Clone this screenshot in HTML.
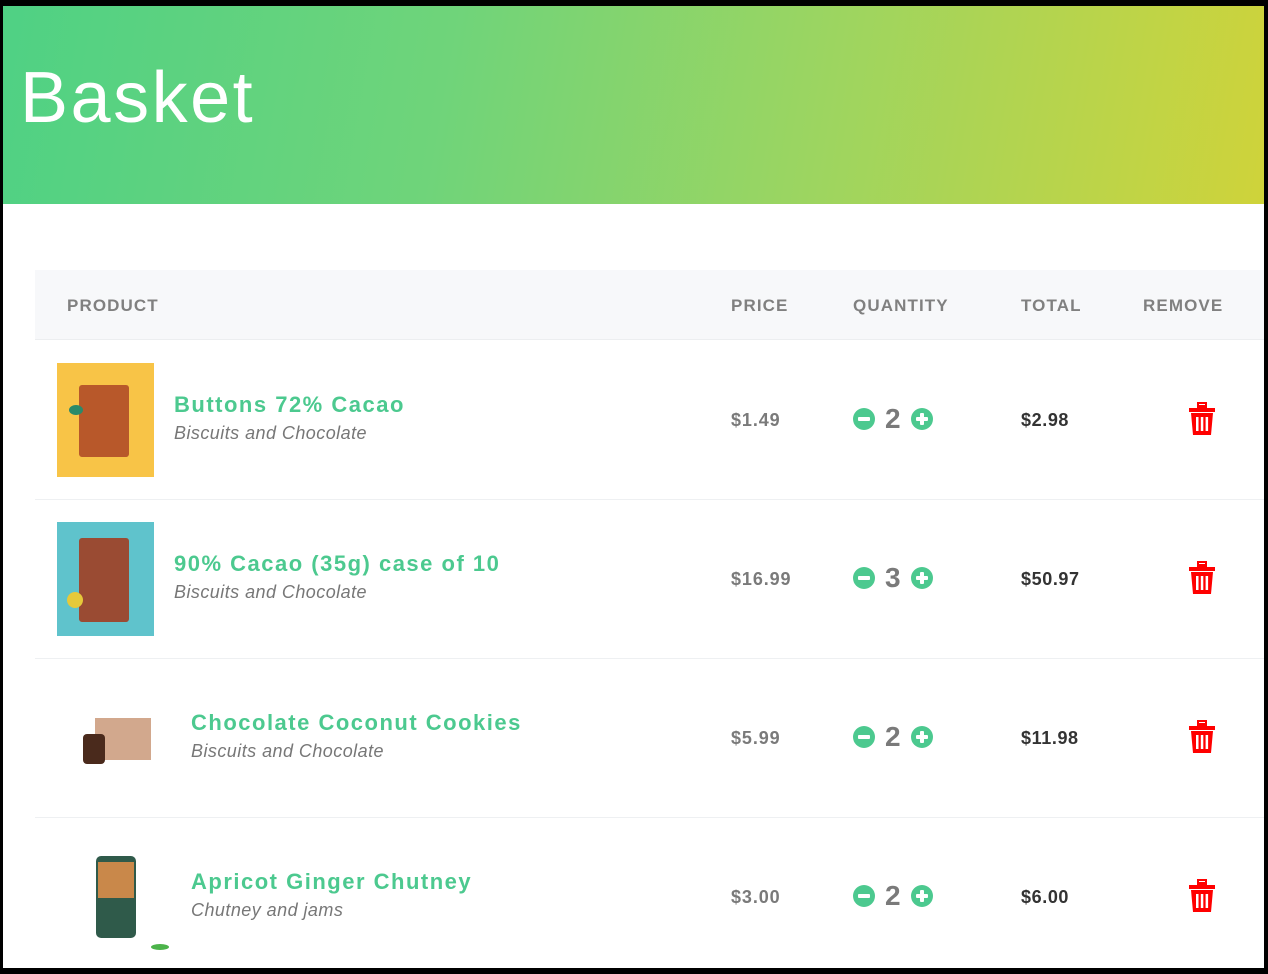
<!DOCTYPE html>
<html><head><meta charset="utf-8"><style>
*{margin:0;padding:0;box-sizing:border-box}
body{width:1268px;height:974px;background:#000;overflow:hidden;font-family:"Liberation Sans",sans-serif;position:relative}
.page{position:absolute;left:3px;top:6px;width:1261px;height:962px;background:#fff;overflow:hidden}
.hdr{position:absolute;left:0;top:0;width:1261px;height:198px;background:linear-gradient(100deg,#4fd184 0%,#6fd47a 35%,#9dd560 65%,#cfd33a 100%)}
.hdr h1{position:absolute;left:17px;top:51px;color:#fff;font-size:72px;font-weight:normal;letter-spacing:2.5px}
.th{position:absolute;left:32px;top:264px;width:1229px;height:70px;background:#f7f8fa;border-bottom:1px solid #eceef0}
.th span{position:absolute;top:26px;font-size:17px;font-weight:bold;color:#808080;letter-spacing:1.1px}
.row{position:absolute;left:32px;width:1229px;height:159px;border-bottom:1px solid #eef0f2}
.name{position:absolute;font-size:22px;font-weight:bold;color:#4cc98f;letter-spacing:1.5px}
.cat{position:absolute;font-size:18px;font-style:italic;color:#777;letter-spacing:.45px}
.price{position:absolute;left:696px;font-size:18px;font-weight:bold;color:#7a7a7a;letter-spacing:.9px}
.qty{position:absolute;left:818px;display:flex;align-items:center}
.qty b{font-size:28px;color:#7a7a7a;margin:0 10px}
.c{width:22px;height:22px;border-radius:50%;background:#4cc98f;position:relative}
.c::before{content:"";position:absolute;left:5px;top:9px;width:12px;height:4px;background:#fff;border-radius:1px}
.c.p::after{content:"";position:absolute;left:9px;top:5px;width:4px;height:12px;background:#fff;border-radius:1px}
.tot{position:absolute;left:986px;font-size:18px;font-weight:bold;color:#333;letter-spacing:.6px}
.trash{position:absolute;left:1152px}
.img{position:absolute;left:22px;top:22px;width:97px;height:114px}
</style></head><body><div class="page">
<div class="hdr"><h1>Basket</h1></div>
<div class="th"><span style="left:32px">PRODUCT</span><span style="left:696px">PRICE</span><span style="left:818px">QUANTITY</span><span style="left:986px">TOTAL</span><span style="left:1108px">REMOVE</span></div>

<div class="row" style="top:335px">
 <div class="img" style="background:#f8c447"><div style="position:absolute;left:22px;top:22px;width:50px;height:72px;background:#b8582a;border-radius:3px"></div><div style="position:absolute;left:12px;top:42px;width:14px;height:10px;background:#2a8a6a;border-radius:50%"></div></div>
 <div class="name" style="left:139px;top:51px">Buttons 72% Cacao</div>
 <div class="cat" style="left:139px;top:82px">Biscuits and Chocolate</div>
 <div class="price" style="top:69px">$1.49</div>
 <div class="qty" style="top:62px"><div class="c"></div><b>2</b><div class="c p"></div></div>
 <div class="tot" style="top:69px">$2.98</div>
 <svg class="trash" style="top:61px" width="30" height="34" viewBox="0 0 30 34"><path d="M10 3h10v3h8v4H2V6h8z" fill="#f00"/><rect x="11" y="1" width="8" height="3" fill="none" stroke="#f00" stroke-width="2"/><path d="M4 11h22l-2 22H6z" fill="#f00"/><rect x="9" y="15" width="2.5" height="14" fill="#fff"/><rect x="13.8" y="15" width="2.5" height="14" fill="#fff"/><rect x="18.6" y="15" width="2.5" height="14" fill="#fff"/></svg>
</div>

<div class="row" style="top:494px">
 <div class="img" style="background:#5fc3cc"><div style="position:absolute;left:22px;top:16px;width:50px;height:84px;background:#9a4b33;border-radius:3px"></div><div style="position:absolute;left:10px;top:70px;width:16px;height:16px;background:#e6c93a;border-radius:50%"></div></div>
 <div class="name" style="left:139px;top:51px">90% Cacao (35g) case of 10</div>
 <div class="cat" style="left:139px;top:82px">Biscuits and Chocolate</div>
 <div class="price" style="top:69px">$16.99</div>
 <div class="qty" style="top:62px"><div class="c"></div><b>3</b><div class="c p"></div></div>
 <div class="tot" style="top:69px">$50.97</div>
 <svg class="trash" style="top:61px" width="30" height="34" viewBox="0 0 30 34"><path d="M10 3h10v3h8v4H2V6h8z" fill="#f00"/><rect x="11" y="1" width="8" height="3" fill="none" stroke="#f00" stroke-width="2"/><path d="M4 11h22l-2 22H6z" fill="#f00"/><rect x="9" y="15" width="2.5" height="14" fill="#fff"/><rect x="13.8" y="15" width="2.5" height="14" fill="#fff"/><rect x="18.6" y="15" width="2.5" height="14" fill="#fff"/></svg>
</div>

<div class="row" style="top:653px">
 <div style="position:absolute;left:60px;top:59px;width:56px;height:42px;background:#d2a88d"></div>
 <div style="position:absolute;left:48px;top:75px;width:22px;height:30px;background:#4a2a1c;border-radius:4px"></div>
 <div class="name" style="left:156px;top:51px">Chocolate Coconut Cookies</div>
 <div class="cat" style="left:156px;top:82px">Biscuits and Chocolate</div>
 <div class="price" style="top:69px">$5.99</div>
 <div class="qty" style="top:62px"><div class="c"></div><b>2</b><div class="c p"></div></div>
 <div class="tot" style="top:69px">$11.98</div>
 <svg class="trash" style="top:61px" width="30" height="34" viewBox="0 0 30 34"><path d="M10 3h10v3h8v4H2V6h8z" fill="#f00"/><rect x="11" y="1" width="8" height="3" fill="none" stroke="#f00" stroke-width="2"/><path d="M4 11h22l-2 22H6z" fill="#f00"/><rect x="9" y="15" width="2.5" height="14" fill="#fff"/><rect x="13.8" y="15" width="2.5" height="14" fill="#fff"/><rect x="18.6" y="15" width="2.5" height="14" fill="#fff"/></svg>
</div>

<div class="row" style="top:812px;border:none">
 <div style="position:absolute;left:61px;top:38px;width:40px;height:82px;background:#2f5a4a;border-radius:5px"><div style="position:absolute;left:2px;top:6px;width:36px;height:36px;background:#c9884a"></div></div>
 <div style="position:absolute;left:116px;top:126px;width:18px;height:6px;background:#4cb34a;border-radius:50%"></div>
 <div class="name" style="left:156px;top:51px">Apricot Ginger Chutney</div>
 <div class="cat" style="left:156px;top:82px">Chutney and jams</div>
 <div class="price" style="top:69px">$3.00</div>
 <div class="qty" style="top:62px"><div class="c"></div><b>2</b><div class="c p"></div></div>
 <div class="tot" style="top:69px">$6.00</div>
 <svg class="trash" style="top:61px" width="30" height="34" viewBox="0 0 30 34"><path d="M10 3h10v3h8v4H2V6h8z" fill="#f00"/><rect x="11" y="1" width="8" height="3" fill="none" stroke="#f00" stroke-width="2"/><path d="M4 11h22l-2 22H6z" fill="#f00"/><rect x="9" y="15" width="2.5" height="14" fill="#fff"/><rect x="13.8" y="15" width="2.5" height="14" fill="#fff"/><rect x="18.6" y="15" width="2.5" height="14" fill="#fff"/></svg>
</div>
</div></body></html>
